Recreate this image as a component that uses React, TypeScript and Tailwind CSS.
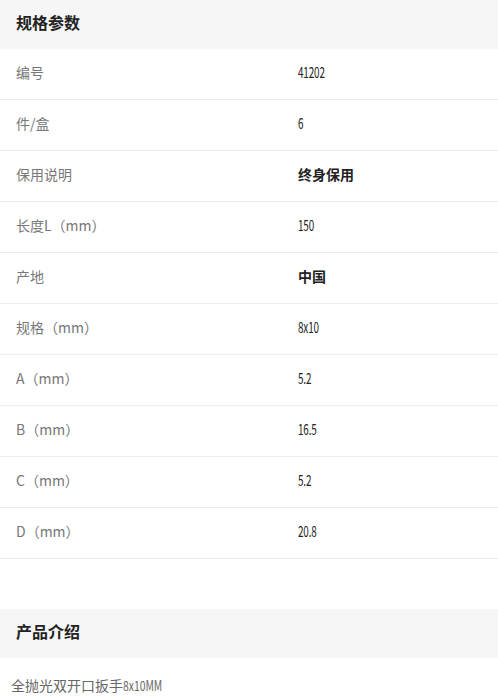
import React from "react";

// Ligne de paramètre : libellé à gauche, valeur à droite
type Spec = { label: string; value: string; strong?: boolean };

const specs: Spec[] = [
  { label: "编号", value: "41202" },
  { label: "件/盒", value: "6" },
  { label: "保用说明", value: "终身保用", strong: true },
  { label: "长度L（mm）", value: "150" },
  { label: "产地", value: "中国", strong: true },
  { label: "规格（mm）", value: "8x10" },
  { label: "A（mm）", value: "5.2" },
  { label: "B（mm）", value: "16.5" },
  { label: "C（mm）", value: "5.2" },
  { label: "D（mm）", value: "20.8" },
];

const font = "font-['Noto_Sans_CJK_SC',sans-serif]";

// chiffres étroits, comme la police condensée de l'original
function Narrow({ children }: { children: React.ReactNode }) {
  return (
    <span className="inline-block origin-left scale-x-[0.66] -translate-y-[2px] text-[15px] tracking-[-0.2px]">
      {children}
    </span>
  );
}

function SectionTitle({ title }: { title: string }) {
  return (
    <div className="h-[49px] bg-[#f6f6f6] flex items-center px-4 pb-[5px]">
      <h2 className="text-[16px] font-bold text-[#222]">{title}</h2>
    </div>
  );
}

export default function App() {
  return (
    <div className={`w-[498px] bg-white ${font}`}>
      <SectionTitle title="规格参数" />
      <div>
        {specs.map((s) => (
          <div key={s.label} className="grid grid-cols-[298px_1fr] h-[51px] items-center border-b border-[#ececec] pb-[3px]">
            <span className="pl-4 text-[14px] text-[#777]">{s.label}</span>
            {s.strong ? (
              <span className="text-[14px] font-bold text-[#222]">{s.value}</span>
            ) : (
              <span className="text-[#222] leading-none">
                <Narrow>{s.value}</Narrow>
              </span>
            )}
          </div>
        ))}
      </div>
      <div className="h-[50px]" />
      <SectionTitle title="产品介绍" />
      <p className="px-[11px] pt-[17px] text-[14px] text-[#666]">
        全抛光双开口扳手
        <span className="inline-block origin-left scale-x-[0.74]">8x10MM</span>
      </p>
    </div>
  );
}
